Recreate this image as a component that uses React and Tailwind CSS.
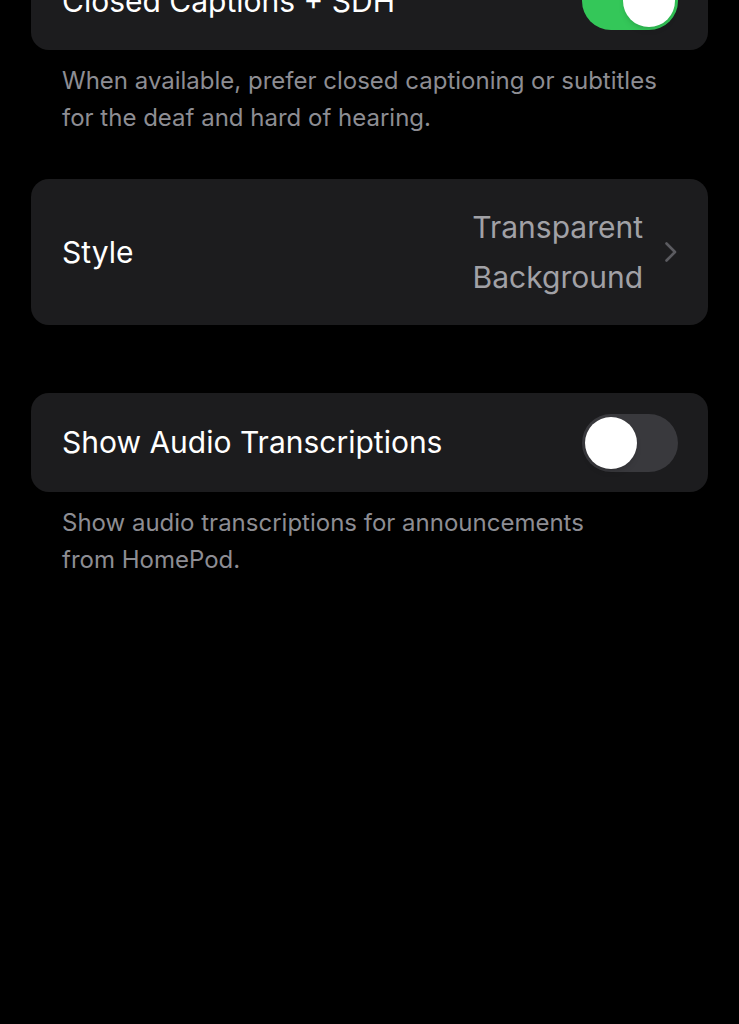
import React from "react";

const Toggle = ({ on }) => (
  <div
    className={`relative w-[96px] h-[58px] rounded-full shrink-0 ${
      on ? "bg-[#34c759]" : "bg-[#39393d]"
    }`}
  >
    <div
      className={`absolute top-[3px] w-[52px] h-[52px] rounded-full bg-white shadow-md ${
        on ? "right-[3px]" : "left-[3px]"
      }`}
    />
  </div>
);

const Footer = ({ children }) => (
  <p className="px-[62px] pt-[12px] text-[24px] leading-[37px] text-[#8d8d93]">
    {children}
  </p>
);

export default function App() {
  return (
    <div
      className="w-full min-h-screen bg-black overflow-hidden"
      style={{ fontFamily: "Inter, 'Noto Sans', sans-serif" }}
    >
      <div className="px-[31px] -mt-[48px]">
        {/* Closed captions */}
        <div className="h-[98px] bg-[#1c1c1e] rounded-[18px] flex items-center justify-between pl-[31px] pr-[30px]">
          <span className="text-[30px] text-white">Closed Captions + SDH</span>
          <Toggle on />
        </div>
      </div>
      <Footer>
        When available, prefer closed captioning or subtitles
        <br />
        for the deaf and hard of hearing.
      </Footer>

      <div className="px-[31px] mt-[43px]">
        {/* Style */}
        <div className="h-[146px] bg-[#1c1c1e] rounded-[18px] flex items-center justify-between pl-[31px] pr-[30px]">
          <span className="text-[30px] text-white">Style</span>
          <div className="flex items-center gap-[21px]">
            <span className="text-right text-[30px] leading-[50px] text-[#a1a1a6]">
              Transparent
              <br />
              Background
            </span>
            <svg width="14" height="22" viewBox="0 0 14 22" fill="none">
              <path
                d="M2.5 2.5 L11 11 L2.5 19.5"
                stroke="#5b5b60"
                strokeWidth="2.6"
                strokeLinecap="round"
                strokeLinejoin="round"
              />
            </svg>
          </div>
        </div>
      </div>

      <div className="px-[31px] mt-[68px]">
        {/* Audio transcriptions */}
        <div className="h-[99px] bg-[#1c1c1e] rounded-[18px] flex items-center justify-between pl-[31px] pr-[30px]">
          <span className="text-[30px] text-white">Show Audio Transcriptions</span>
          <Toggle />
        </div>
      </div>
      <Footer>
        Show audio transcriptions for announcements
        <br />
        from HomePod.
      </Footer>
    </div>
  );
}
